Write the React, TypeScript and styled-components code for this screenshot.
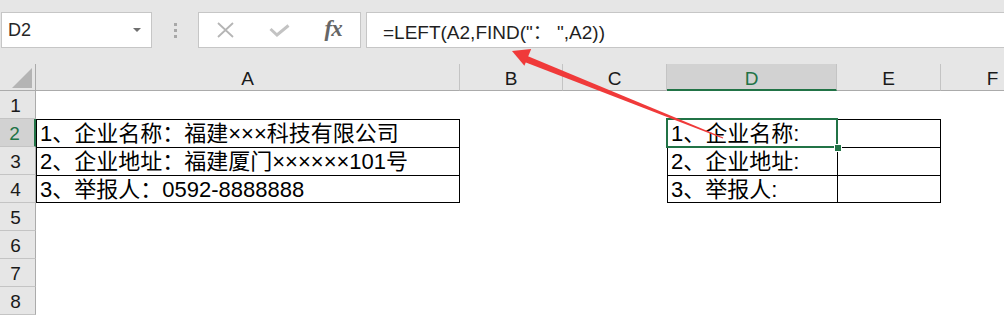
import React from "react";
import styled, { createGlobalStyle, css } from "styled-components";

const GREEN = "#217346";

const GlobalStyle = createGlobalStyle`
  html, body {
    margin: 0;
    padding: 0;
    background: #fff;
  }
  body {
    font-family: "Liberation Sans", "Noto Sans CJK SC", sans-serif;
    overflow: hidden;
  }
`;

const Page = styled.div`
  position: relative;
  width: 1004px;
  height: 315px;
  overflow: hidden;
  background: #fff;
`;

/* formula bar */

const Toolbar = styled.div`
  display: flex;
  align-items: flex-start;
  height: 64px;
  box-sizing: border-box;
  padding: 12px 0 0 1px;
  background: #e6e6e6;
`;

const NameBox = styled.div`
  display: flex;
  align-items: center;
  justify-content: space-between;
  width: 151px;
  height: 36px;
  box-sizing: border-box;
  padding: 0 10px 0 6px;
  border: 1px solid #c6c6c6;
  background: #fff;
  font-size: 18px;
  color: #262626;
`;

const Caret = styled.span`
  width: 0;
  height: 0;
  border-left: 4px solid transparent;
  border-right: 4px solid transparent;
  border-top: 4px solid #6f6f6f;
  margin-top: -1px;
`;

const Grip = styled.div`
  display: flex;
  flex-direction: column;
  align-items: center;
  justify-content: center;
  gap: 3px;
  width: 46px;
  height: 36px;
  span {
    width: 3px;
    height: 3px;
    background: #a8a8a8;
  }
`;

const ButtonBox = styled.div`
  display: flex;
  width: 163px;
  height: 36px;
  box-sizing: border-box;
  border: 1px solid #c6c6c6;
  background: #fff;
`;

const BarButton = styled.div`
  flex: 1;
  display: flex;
  align-items: center;
  justify-content: center;
`;

const Fx = styled.span`
  font-family: "Liberation Serif", "DejaVu Serif", serif;
  font-style: italic;
  font-weight: bold;
  font-size: 23px;
  color: #666;
  letter-spacing: -1px;
  margin-top: -3px;
`;

const FormulaBox = styled.div`
  flex: 1;
  display: flex;
  align-items: center;
  height: 36px;
  margin-left: 5px;
  box-sizing: border-box;
  padding-left: 16px;
  border: 1px solid #c6c6c6;
  border-right: none;
  background: #fff;
  font-size: 19px;
  color: #1f1f1f;
  white-space: pre;
`;

/* sheet */

const Sheet = styled.div`
  display: grid;
  grid-template-columns: 36px 424px 103px 104px 170px 104px 104px;
  grid-template-rows: 27px;
  grid-auto-rows: 28px;
`;

const Corner = styled.div`
  position: relative;
  box-sizing: border-box;
  background: #e6e6e6;
  border-right: 1px solid #ababab;
  border-bottom: 1px solid #ababab;
  &::after {
    content: "";
    position: absolute;
    right: 3px;
    bottom: 2px;
    width: 0;
    height: 0;
    border-left: 20px solid transparent;
    border-bottom: 20px solid #b4b4b4;
  }
`;

const ColHeader = styled.div<{ $active?: boolean }>`
  display: flex;
  align-items: center;
  justify-content: center;
  box-sizing: border-box;
  padding-top: 4px;
  background: #e6e6e6;
  border-right: 1px solid #c4c4c4;
  border-bottom: 1px solid #ababab;
  font-size: 19px;
  color: #1a1a1a;
  ${(p) =>
    p.$active &&
    css`
      background: #d2d2d2;
      color: ${GREEN};
      border-bottom: 2px solid ${GREEN};
      padding-top: 5px;
    `}
`;

const RowHeader = styled.div<{ $active?: boolean }>`
  display: flex;
  align-items: center;
  justify-content: center;
  box-sizing: border-box;
  padding: 2px 4px 0 0;
  background: #e6e6e6;
  border-right: 1px solid #ababab;
  border-bottom: 1px solid #c4c4c4;
  font-size: 19px;
  color: #1a1a1a;
  ${(p) =>
    p.$active &&
    css`
      background: #d2d2d2;
      color: ${GREEN};
      border-right: 2px solid ${GREEN};
      padding-right: 5px;
    `}
`;

type Edges = { top?: boolean; right?: boolean; bottom?: boolean; left?: boolean };

const Cell = styled.div<{ $edges?: Edges }>`
  position: relative;
  display: flex;
  align-items: center;
  box-sizing: border-box;
  padding: 1px 0 0 3px;
  font-size: 22px;
  line-height: 1;
  color: #000;
  white-space: pre;
  ${(p) => p.$edges?.top && "border-top: 1px solid #000;"}
  ${(p) => p.$edges?.right && "border-right: 1px solid #000;"}
  ${(p) => p.$edges?.bottom && "border-bottom: 1px solid #000;"}
  ${(p) => p.$edges?.left && "border-left: 1px solid #000;"}
`;

const Selection = styled.div`
  position: absolute;
  top: -2px;
  left: -2px;
  right: -1px;
  bottom: -1px;
  border: 2px solid ${GREEN};
  z-index: 2;
  pointer-events: none;
  &::after {
    content: "";
    position: absolute;
    right: -5px;
    bottom: -5px;
    width: 6px;
    height: 6px;
    background: ${GREEN};
    outline: 1px solid #fff;
  }
`;

const Overlay = styled.svg`
  position: absolute;
  top: 0;
  left: 0;
  z-index: 5;
  pointer-events: none;
`;

const columns = ["A", "B", "C", "D", "E", "F"];

const tableA = [
  "1、企业名称：福建×××科技有限公司",
  "2、企业地址：福建厦门××××××101号",
  "3、举报人：0592-8888888",
];

const tableD = ["1、企业名称:", "2、企业地址:", "3、举报人:"];

const edgesFor = (col: string, row: number): Edges | undefined => {
  if (row < 2 || row > 4) return undefined;
  const bottom = row === 4;
  if (col === "A") return { top: true, left: true, right: true, bottom };
  if (col === "D") return { top: true, left: true, bottom };
  if (col === "E") return { top: true, left: true, right: true, bottom };
  return undefined;
};

const textFor = (col: string, row: number) => {
  if (row < 2 || row > 4) return "";
  if (col === "A") return tableA[row - 2];
  if (col === "D") return tableD[row - 2];
  return "";
};

const App = () => {
  const rows = [1, 2, 3, 4, 5, 6, 7, 8];

  return (
    <Page>
      <GlobalStyle />
      <Toolbar>
        <NameBox>
          D2
          <Caret />
        </NameBox>
        <Grip>
          <span />
          <span />
          <span />
        </Grip>
        <ButtonBox>
          <BarButton>
            <svg width="17" height="16" viewBox="0 0 17 16">
              <path d="M1 1 L16 15 M16 1 L1 15" stroke="#b5b5b5" strokeWidth="1.8" fill="none" />
            </svg>
          </BarButton>
          <BarButton>
            <svg width="21" height="13" viewBox="0 0 21 13">
              <path d="M1.5 5 L8 11 L19.5 1.5" stroke="#c3c3c3" strokeWidth="3" fill="none" />
            </svg>
          </BarButton>
          <BarButton>
            <Fx>fx</Fx>
          </BarButton>
        </ButtonBox>
        <FormulaBox>=LEFT(A2,FIND("： ",A2))</FormulaBox>
      </Toolbar>

      <Sheet>
        <Corner />
        {columns.map((c) => (
          <ColHeader key={c} $active={c === "D"}>
            {c}
          </ColHeader>
        ))}
        {rows.map((r) => (
          <React.Fragment key={r}>
            <RowHeader $active={r === 2}>{r}</RowHeader>
            {columns.map((c) => (
              <Cell key={c} $edges={edgesFor(c, r)}>
                {textFor(c, r)}
                {c === "D" && r === 2 && <Selection />}
              </Cell>
            ))}
          </React.Fragment>
        ))}
      </Sheet>

      {/* red arrow pointing at the formula */}
      <Overlay width="1004" height="315" viewBox="0 0 1004 315">
        <polygon points="524.6,62 527.4,56 723.2,137.4 722.8,138.6" fill="#f03a3a" />
        <polygon points="512,51 531.2,48.9 524.4,65.7" fill="#f03a3a" />
      </Overlay>
    </Page>
  );
};

export default App;
